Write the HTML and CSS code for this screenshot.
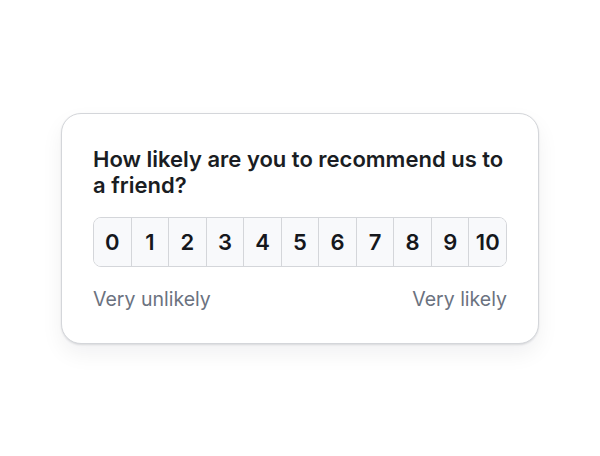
FILE: index.html
```html
<!DOCTYPE html>
<html lang="en">
<head>
    <meta charset="UTF-8">
    <meta name="viewport" content="width=device-width, initial-scale=1.0">
    <title>Recommend us</title>
    <link rel="stylesheet" href="styles.css">
</head>
<body>

    <div class="card">
        <h2 class="question">How likely are you to recommend us to a friend?</h2>
        <div class="scale">
            <button class="score">0</button>
            <button class="score">1</button>
            <button class="score">2</button>
            <button class="score">3</button>
            <button class="score">4</button>
            <button class="score">5</button>
            <button class="score">6</button>
            <button class="score">7</button>
            <button class="score">8</button>
            <button class="score">9</button>
            <button class="score">10</button>
        </div>
        <div class="labels">
            <span>Very unlikely</span>
            <span>Very likely</span>
        </div>
    </div>

</body>
</html>
```

FILE: styles.css
```css
body {
    font-family: Inter, "Noto Sans", sans-serif;
    margin: 0;
    height: 456px;
    background-color: #fff;
    display: flex;
    align-items: center;
    justify-content: center;
}
.card {
    width: 478px;
    box-sizing: border-box;
    padding: 32px 31px 32px;
    border: 1px solid #d4d6da;
    border-radius: 20px;
    background-color: #fff;
    box-shadow: 0 1px 2px rgba(17, 24, 39, 0.12), 0 10px 22px rgba(17, 24, 39, 0.06);
}
.question {
    margin: 0 0 19px;
    font-size: 22px;
    line-height: 26px;
    font-weight: 600;
    color: #1a1d23;
}
.scale {
    display: flex;
    border: 1px solid #d4d6da;
    border-radius: 8px;
    overflow: hidden;
}
.score {
    flex: 1;
    height: 48px;
    padding: 0;
    border: none;
    border-left: 1px solid #d4d6da;
    background-color: #f8f9fb;
    font-family: inherit;
    font-size: 22px;
    font-weight: 600;
    color: #15171c;
    cursor: pointer;
}
.score:first-child {
    border-left: none;
}
.labels {
    display: flex;
    justify-content: space-between;
    margin-top: 20px;
    font-size: 19.5px;
    line-height: 24px;
    color: #6b7280;
}
```
